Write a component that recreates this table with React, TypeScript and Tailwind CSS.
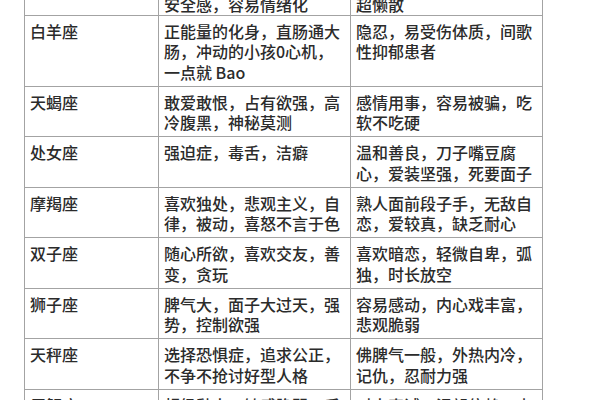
const ROWS = [
  { sign: '白羊座', traits: '正能量的化身，直肠通大肠，冲动的小孩0心机，一点就 Bao', weak: '隐忍，易受伤体质，间歌性抑郁患者' },
  { sign: '天蝎座', traits: '敢爱敢恨，占有欲强，高冷腹黑，神秘莫测', weak: '感情用事，容易被骗，吃软不吃硬' },
  { sign: '处女座', traits: '强迫症，毒舌，洁癖', weak: '温和善良，刀子嘴豆腐心，爱装坚强，死要面子' },
  { sign: '摩羯座', traits: '喜欢独处，悲观主义，自律，被动，喜怒不言于色', weak: '熟人面前段子手，无敌自恋，爱较真，缺乏耐心' },
  { sign: '双子座', traits: '随心所欲，喜欢交友，善变，贪玩', weak: '喜欢暗恋，轻微自卑，弧独，时长放空' },
  { sign: '狮子座', traits: '脾气大，面子大过天，强势，控制欲强', weak: '容易感动，内心戏丰富，悲观脆弱' },
  { sign: '天秤座', traits: '选择恐惧症，追求公正，不争不抢讨好型人格', weak: '佛脾气一般，外热内冷，记仇，忍耐力强' },
  { sign: '巨蟹座', traits: '超级黏人，敏感脆弱，后知后觉', weak: '对人真诚，渴望依赖，内心柔软' },
];

const cell = 'border border-[#a3a3a3] align-top pl-[5px] pr-[5px] pt-[5px] pb-[3.5px]';

export default function App() {
  return (
    <div
      className="h-[400px] w-[600px] overflow-hidden bg-white text-[16px] font-medium leading-[20.5px] text-[#2b2b2b]"
      style={{ fontFamily: '"Noto Sans CJK SC", "Noto Sans", sans-serif' }}
    >
      <table className="ml-[24px] mt-[-12px] w-[518px] table-fixed border-collapse">
        <colgroup>
          <col className="w-[134px]" />
          <col className="w-[192px]" />
          <col className="w-[192px]" />
        </colgroup>
        <tbody>
          {/* row cut off at the top of the shot */}
          <tr>
            <td className="border border-[#a3a3a3] pl-[5px] pt-[5px] pb-0"></td>
            <td className="border border-[#a3a3a3] pl-[5px] pt-[5px] pb-0">安全感，容易情绪化</td>
            <td className="border border-[#a3a3a3] pl-[5px] pt-[5px] pb-0">超懒散</td>
          </tr>
          {ROWS.map((r) => (
            <tr key={r.sign}>
              <td className={cell}>{r.sign}</td>
              <td className={cell}>{r.traits}</td>
              <td className={cell}>{r.weak}</td>
            </tr>
          ))}
        </tbody>
      </table>
    </div>
  );
}
